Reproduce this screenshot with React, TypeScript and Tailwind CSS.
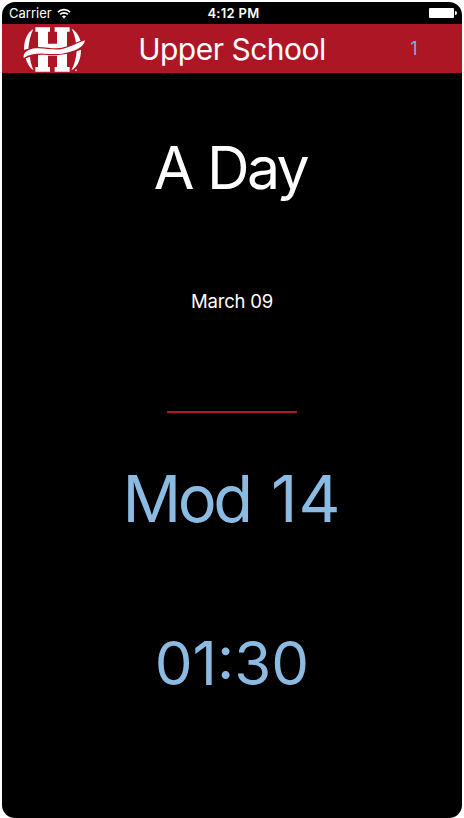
function Logo() {
  return (
    <svg viewBox="0 0 210 156" className="h-[52px] w-[70px] shrink-0" fill="#fff">
      <path d="M46 13H90V26H84V62H111V26H104V13H149V26H141V132H149V146H104V132H111V98H84V132H90V146H46V132H54V26H46Z" />
      <path d="M40 18C22 29 12 50 12 80L25 77C27 56 31 37 40 18ZM17 106C22 123 29 135 41 142C35 129 31 116 30 101Z" />
      <path d="M155 18C168 24 177 38 182 55L168 61C166 45 162 31 155 18ZM183 80C183 108 173 132 154 142C164 124 168 105 170 85Z" />
      <path d="M11 105C8 88 26 78 47 76C76 74 99 83 126 78C151 73 166 62 195 52C190 75 167 82 148 87C120 96 96 93 71 92C48 91 29 94 11 105Z" stroke="#ad1625" strokeWidth="7" />
      <path d="M11 105C8 88 26 78 47 76C76 74 99 83 126 78C151 73 166 62 195 52C190 75 167 82 148 87C120 96 96 93 71 92C48 91 29 94 11 105Z" />
      <circle cx="168" cy="142" r="3" fill="#e8b8bd" />
    </svg>
  );
}

function Wifi() {
  return (
    <svg viewBox="0 0 14 11" className="ml-[5px] h-[11px] w-[14px]" fill="none" stroke="#fff" strokeWidth="1.7">
      <path d="M.9 4.1a8.6 8.6 0 0 1 12.2 0M3.1 6.4a5.5 5.5 0 0 1 7.8 0" />
      <path d="M7 10.6 4.9 8.5a3 3 0 0 1 4.2 0Z" fill="#fff" stroke="none" />
    </svg>
  );
}

export default function App() {
  return (
    <div className="h-[818px] w-[464px] bg-white pt-[2px] pl-[2px] font-['Inter',sans-serif] text-white">
      <div className="flex h-[816px] w-[460px] flex-col overflow-hidden rounded-[13px] bg-black">
        <div className="grid h-[22px] shrink-0 grid-cols-3 items-center">
          <div className="flex items-center pl-[7px] text-[13px] leading-none">
            Carrier
            <Wifi />
          </div>
          <div className="pl-[3px] text-center text-[13px] leading-none font-semibold tracking-[0.3px]">4:12 PM</div>
          <div className="flex items-center justify-end pr-[5px]">
            <div className="h-[10px] w-[25px] rounded-[1px] bg-white" />
            <div className="ml-px h-[4px] w-[1.5px] rounded-r bg-white" />
          </div>
        </div>
        <div className="flex h-[49px] shrink-0 items-center bg-[#ad1625] pl-[18px]">
          <Logo />
          <div className="ml-[41px] w-[202px] text-center text-[30px] leading-none font-[370] tracking-[-0.5px] whitespace-nowrap">Upper School</div>
          <div className="ml-[71px] w-[20px] text-center text-[18px] leading-none font-[370] text-[#79aee0]">1</div>
        </div>
        <div className="flex h-[189px] shrink-0 items-center justify-center pr-[3px] text-[59px] leading-none font-[370] tracking-[-2.6px] [word-spacing:1px]">A Day</div>
        <div className="flex h-[79px] shrink-0 items-center justify-center text-[18.5px] leading-none font-[370] tracking-[-0.2px]">March 09</div>
        <div className="mx-auto mt-[70px] h-[2px] w-[130px] shrink-0 bg-[#b01a27]" />
        <div className="flex h-[170px] shrink-0 items-center justify-center text-[65px] leading-none font-[370] text-[#8bbbe3]">
          <div className="whitespace-pre">
            <span className="tracking-[-3.4px]">Mod</span>
            <span className="tracking-[3px]"> </span>
            <span className="tracking-[1px]">14</span>
          </div>
        </div>
        <div className="flex h-[159px] shrink-0 items-center justify-center text-[60px] leading-none font-[370] tracking-[0px] text-[#8bbbe3]">01:30</div>
      </div>
    </div>
  );
}
